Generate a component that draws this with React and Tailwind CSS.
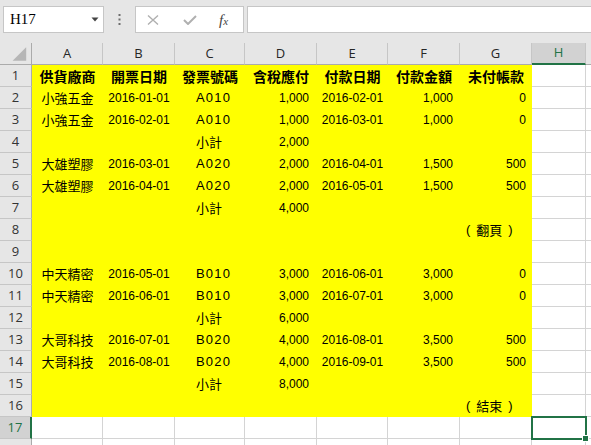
import React from "react";

const CJK = "font-['Noto_Sans_CJK_TC',sans-serif]";
const NUM = "font-['Liberation_Sans',Arial,sans-serif]";
const HDR = "font-['Open_Sans',sans-serif]";

// A..G sheet rows (1..16). Empty string = blank cell.
const rows = [
  ["供貨廠商", "開票日期", "發票號碼", "含稅應付", "付款日期", "付款金額", "未付帳款"],
  ["小強五金", "2016-01-01", "A010", "1,000", "2016-02-01", "1,000", "0"],
  ["小強五金", "2016-02-01", "A010", "1,000", "2016-03-01", "1,000", "0"],
  ["", "", "小計", "2,000", "", "", ""],
  ["大雄塑膠", "2016-03-01", "A020", "2,000", "2016-04-01", "1,500", "500"],
  ["大雄塑膠", "2016-04-01", "A020", "2,000", "2016-05-01", "1,500", "500"],
  ["", "", "小計", "4,000", "", "", ""],
  ["", "", "", "", "", "", { note: "翻頁" }],
  ["", "", "", "", "", "", ""],
  ["中天精密", "2016-05-01", "B010", "3,000", "2016-06-01", "3,000", "0"],
  ["中天精密", "2016-06-01", "B010", "3,000", "2016-07-01", "3,000", "0"],
  ["", "", "小計", "6,000", "", "", ""],
  ["大哥科技", "2016-07-01", "B020", "4,000", "2016-08-01", "3,500", "500"],
  ["大哥科技", "2016-08-01", "B020", "4,000", "2016-09-01", "3,500", "500"],
  ["", "", "小計", "8,000", "", "", ""],
  ["", "", "", "", "", "", { note: "結束" }],
];

const widths = ["w-[71px]", "w-[72px]", "w-[70px]", "w-[72px]", "w-[71px]", "w-[72px]", "w-[72px]"];
const letters = ["A", "B", "C", "D", "E", "F", "G"];

function RowHeader({ n, active }) {
  return (
    <div
      className={
        active
          ? `w-[32px] shrink-0 h-full flex items-center justify-center bg-[#d2d2d2] border-b border-[#c6c6c6] border-r-2 border-r-[#217346] text-[13px] text-[#217346] ${HDR}`
          : `w-[32px] shrink-0 h-full flex items-center justify-center bg-[#e6e6e6] border-b border-[#c6c6c6] border-r border-r-[#ababab] text-[13px] text-[#333] ${HDR}`
      }
    >
      {n}
    </div>
  );
}

function Cell({ col, value, header }) {
  const w = widths[col];
  if (value && typeof value === "object") {
    return (
      <div className={`${w} shrink-0 h-full bg-[#ffff00] flex items-center pl-[6px] text-[13px] text-black ${CJK}`}>
        <span className={NUM}>(</span>
        <span className="ml-[6px]">{value.note}</span>
        <span className={`ml-[6px] ${NUM}`}>)</span>
      </div>
    );
  }
  if (header) {
    return (
      <div className={`${w} shrink-0 h-full bg-[#ffff00] flex items-center justify-center text-[14px] font-bold text-black ${CJK}`}>
        {value}
      </div>
    );
  }
  let align = "justify-center";
  let font = NUM;
  let size = "text-[12px]";
  if (col === 0) {
    font = CJK;
    size = "text-[13px]";
  } else if (col === 2) {
    align = "justify-start pl-[21px]";
    if (value === "小計") {
      font = CJK;
      size = "text-[13px]";
    } else {
      size = "text-[13px] tracking-[1.2px]";
    }
  } else if (col === 3) {
    align = "justify-end pr-[8px]";
  } else if (col === 5) {
    align = "justify-end pr-[7px]";
  } else if (col === 6) {
    align = "justify-end pr-[6px]";
  }
  return (
    <div className={`${w} shrink-0 h-full bg-[#ffff00] flex items-center ${align} ${size} text-black ${font}`}>
      {value}
    </div>
  );
}

function BlankCell({ w }) {
  return <div className={`${w} shrink-0 h-full bg-white border-r border-b border-[#d4d4d4]`} />;
}

export default function App() {
  return (
    <div className="w-[591px] h-[445px] overflow-hidden bg-[#e6e6e6] select-none">
      {/* formula bar */}
      <div className="h-[43px] flex items-start pt-[6px]">
        <div className="ml-[3px] w-[101px] h-[27px] shrink-0 bg-white border border-[#c6c6c6] flex items-center justify-between pl-[6px] pr-[4px]">
          <span className="font-['Liberation_Serif',serif] text-[15px] text-black leading-none">H17</span>
          <svg width="8" height="5" viewBox="0 0 8 5">
            <polygon points="0.5,0.5 7.5,0.5 4,4.5" fill="#444" />
          </svg>
        </div>
        <div className="w-[31px] h-[27px] shrink-0 flex items-center justify-center">
          <svg width="3" height="11" viewBox="0 0 3 11">
            <rect x="0.5" y="0" width="2" height="2" fill="#6d6d6d" />
            <rect x="0.5" y="4.5" width="2" height="2" fill="#6d6d6d" />
            <rect x="0.5" y="9" width="2" height="2" fill="#6d6d6d" />
          </svg>
        </div>
        <div className="w-[109px] h-[27px] shrink-0 bg-white border border-[#c6c6c6] flex items-center">
          <svg className="ml-[11px]" width="12" height="10" viewBox="0 0 12 10">
            <path d="M1 0.5 L11 9.5 M11 0.5 L1 9.5" stroke="#b0b0b0" strokeWidth="1.4" fill="none" />
          </svg>
          <svg className="ml-[24px]" width="14" height="10" viewBox="0 0 14 10">
            <path d="M1 5 L5 9 L13 1" stroke="#b0b0b0" strokeWidth="2" fill="none" />
          </svg>
          <span className="ml-[22px] font-['Liberation_Serif',serif] italic text-[#444] leading-none">
            <span className="text-[15px]">f</span>
            <span className="text-[11px]">x</span>
          </span>
        </div>
        <div className="ml-[3px] flex-1 h-[27px] bg-white border border-r-0 border-[#c6c6c6]" />
      </div>

      {/* column headers */}
      <div className="flex h-[22px]">
        <div className="w-[32px] shrink-0 h-full border-r border-b border-[#ababab] flex items-end justify-end">
          <svg width="32" height="22" viewBox="0 0 32 22">
            <polygon points="27,5 27,19 13,19" fill="#b6b6b6" />
          </svg>
        </div>
        {letters.map((l, i) => (
          <div
            key={l}
            className={`${widths[i]} shrink-0 h-full flex items-center justify-center border-r border-r-[#c6c6c6] border-b border-b-[#ababab] text-[13px] text-[#262626] ${HDR}`}
          >
            {l}
          </div>
        ))}
        <div className={`w-[54px] shrink-0 h-full flex items-center justify-center bg-[#d2d2d2] border-r border-r-[#c6c6c6] border-b-2 border-b-[#217346] text-[13px] text-[#217346] ${HDR}`}>
          H
        </div>
        <div className="flex-1 h-full border-b border-[#ababab]" />
      </div>

      {/* sheet body */}
      {rows.map((r, ri) => (
        <div key={ri} className="flex h-[22px]">
          <RowHeader n={ri + 1} />
          {r.map((v, ci) => (
            <Cell key={ci} col={ci} value={v} header={ri === 0} />
          ))}
          <BlankCell w="w-[54px]" />
          <div className="flex-1 h-full bg-white border-b border-[#d4d4d4]" />
        </div>
      ))}

      {/* row 17 with the active cell H17 */}
      <div className="flex h-[22px]">
        <RowHeader n={17} active />
        {widths.map((w, i) => (
          <BlankCell key={i} w={w} />
        ))}
        <div className="w-[54px] shrink-0 h-full bg-white border-r border-b border-[#d4d4d4] relative">
          <div className="absolute -left-[1px] -top-[1px] w-[56px] h-[24px] border-2 border-[#217346]" />
          <div className="absolute -right-[4px] -bottom-[4px] w-[7px] h-[7px] bg-[#217346] border border-white" />
        </div>
        <div className="flex-1 h-full bg-white border-b border-[#d4d4d4]" />
      </div>

      {/* next row, only its top edge shows */}
      <div className="flex h-[22px]">
        <RowHeader n="" />
        {widths.map((w, i) => (
          <BlankCell key={i} w={w} />
        ))}
        <BlankCell w="w-[54px]" />
        <div className="flex-1 h-full bg-white border-b border-[#d4d4d4]" />
      </div>
    </div>
  );
}
